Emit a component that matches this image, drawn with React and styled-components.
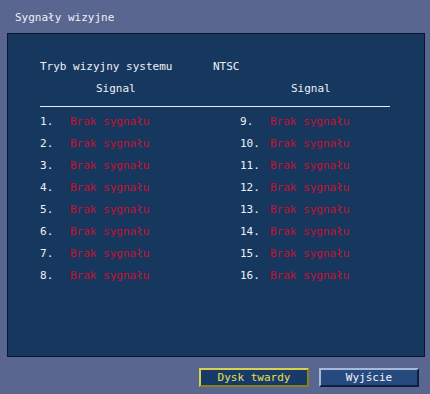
import React from "react";
import styled, { createGlobalStyle } from "styled-components";

const Global = createGlobalStyle`
  html, body { margin: 0; padding: 0; background: #596690; }
  body { font-family: "DejaVu Sans Mono", "Liberation Mono", monospace; }
`;

const Screen = styled.div`
  width: 430px;
  height: 394px;
  background: #596690;
  display: flex;
  flex-direction: column;
  font-size: 11px;
  color: #eef0f6;
`;

const Title = styled.div`
  height: 33px;
  box-sizing: border-box;
  padding: 11px 0 0 15px;
  line-height: 14px;
`;

const Panel = styled.div`
  margin-left: 7px;
  width: 418px;
  height: 324px;
  box-sizing: border-box;
  background: #16385f;
  border: 1px solid #0a1530;
  padding: 26px 0 0 32px;
  display: flex;
  flex-direction: column;
`;

const ModeRow = styled.div`
  display: flex;
  line-height: 14px;
  height: 14px;
`;

const ModeLabel = styled.span`
  width: 173px;
`;

const HeadRow = styled.div`
  display: grid;
  grid-template-columns: 200px 150px;
  margin-top: 8px;
  line-height: 14px;
`;

const Head = styled.span`
  padding-left: ${(p) => p.$indent}px;
`;

const Rule = styled.div`
  width: 350px;
  height: 1px;
  background: #e8ecf4;
  margin-top: 10px;
`;

const Grid = styled.div`
  display: grid;
  grid-template-columns: 200px 150px;
  grid-auto-flow: column;
  grid-template-rows: repeat(8, 22px);
  margin-top: 4px;
`;

const Row = styled.div`
  display: flex;
  align-items: center;
  line-height: 14px;
`;

const Num = styled.span`
  width: 30px;
`;

const Status = styled.span`
  color: #c8102e;
`;

const Footer = styled.div`
  flex: 1;
  display: flex;
  justify-content: flex-end;
  align-items: flex-start;
  gap: 10px;
  padding: 11px 11px 0 0;
`;

const Button = styled.div`
  box-sizing: border-box;
  width: ${(p) => p.$w}px;
  height: 19px;
  display: flex;
  align-items: center;
  justify-content: center;
  line-height: 14px;
  background: ${(p) => (p.$active ? "#183a68" : "#26497e")};
  color: ${(p) => (p.$active ? "#e6e04a" : "#f2f4fa")};
  border: 2px solid;
  border-color: ${(p) =>
    p.$active
      ? "#d8d050 #8a8020 #8a8020 #d8d050"
      : "#a8b8d8 #0e2040 #0e2040 #a8b8d8"};
`;

export default function App() {
  const left = [1, 2, 3, 4, 5, 6, 7, 8];
  const right = [9, 10, 11, 12, 13, 14, 15, 16];
  return (
    <>
      <Global />
      <Screen>
        <Title>Sygnały wizyjne</Title>
        <Panel>
          <ModeRow>
            <ModeLabel>Tryb wizyjny systemu</ModeLabel>
            <span>NTSC</span>
          </ModeRow>
          <HeadRow>
            <Head $indent={56}>Signal</Head>
            <Head $indent={51}>Signal</Head>
          </HeadRow>
          <Rule />
          <Grid>
            {[...left, ...right].map((n) => (
              <Row key={n}>
                <Num>{n}.</Num>
                <Status>Brak sygnału</Status>
              </Row>
            ))}
          </Grid>
        </Panel>
        <Footer>
          <Button $w={110} $active>Dysk twardy</Button>
          <Button $w={100}>Wyjście</Button>
        </Footer>
      </Screen>
    </>
  );
}
